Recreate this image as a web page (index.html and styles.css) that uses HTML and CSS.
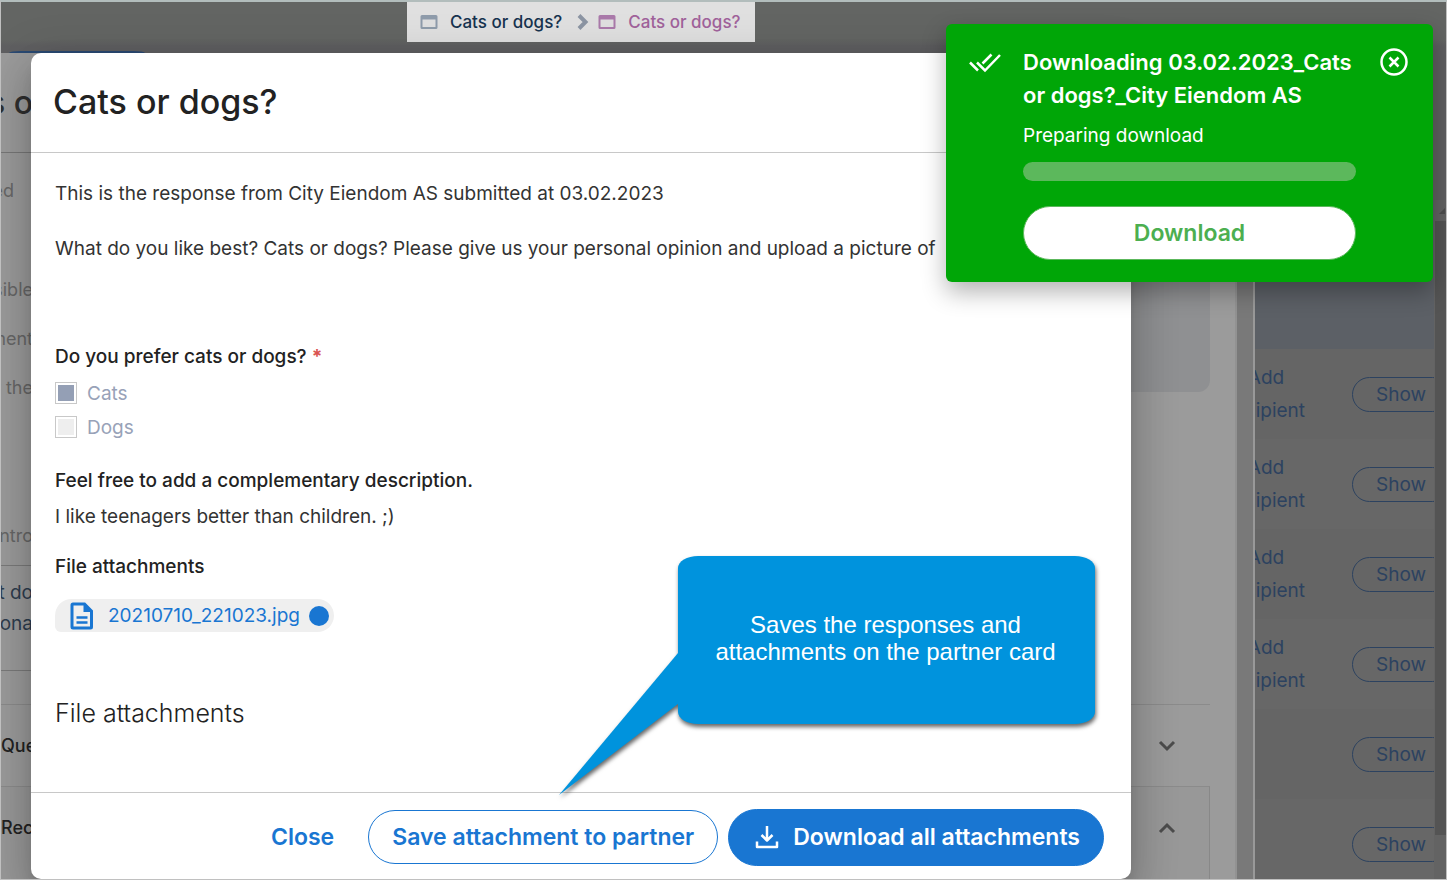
FILE: index.html
```html
<!DOCTYPE html>
<html lang="en">
<head>
    <meta charset="UTF-8">
    <meta name="viewport" content="width=device-width, initial-scale=1.0">
    <title>Cats or dogs?</title>
    <link rel="stylesheet" href="styles.css">
</head>
<body>
    <div class="app">
        <header class="topbar">
            <nav class="breadcrumb" aria-label="Breadcrumb">
                <a class="crumb" href="#">
                    <svg width="18" height="16" viewBox="0 0 18 16"><path fill="currentColor" fill-rule="evenodd" d="M2 1h14a1.500 1.500 0 0 1 1.500 1.500v11a1.500 1.500 0 0 1-1.500 1.500H2a1.500 1.500 0 0 1-1.500-1.500v-11A1.500 1.500 0 0 1 2 1zm.5 4.500v7.500h13V5.500z"/></svg>
                    <span>Cats or dogs?</span>
                </a>
                <svg class="crumb-sep" width="12" height="18" viewBox="0 0 12 18"><path d="M2 2.500L8.500 9L2 15.500" fill="none" stroke="currentColor" stroke-width="4"/></svg>
                <a class="crumb crumb-active" href="#">
                    <svg width="18" height="16" viewBox="0 0 18 16"><path fill="currentColor" fill-rule="evenodd" d="M2 1h14a1.500 1.500 0 0 1 1.500 1.500v11a1.500 1.500 0 0 1-1.500 1.500H2a1.500 1.500 0 0 1-1.500-1.500v-11A1.500 1.500 0 0 1 2 1zm.5 4.500v7.500h13V5.500z"/></svg>
                    <span>Cats or dogs?</span>
                </a>
            </nav>
            <div class="pill-edge"></div>
        </header>

        <main class="workspace">
            <section class="page">
                <div class="page-title">s o</div>
                <div class="page-intro">
                    <div class="page-labels">
                        <p class="label-first">ed</p>
                        <p class="label-gap">sible</p>
                        <p>ment</p>
                        <p>r the</p>
                        <p class="label-last">ntro</p>
                    </div>
                    <div class="page-card"></div>
                </div>
                <div class="page-note">
                    <p>t do</p>
                    <p>ona</p>
                </div>
                <div class="accordion accordion-closed">
                    <span>Que</span>
                    <button class="chevron" aria-label="Expand"><svg width="18" height="12" viewBox="0 0 18 12"><path d="M2 2l7 7l7-7" fill="none" stroke="currentColor" stroke-width="3"/></svg></button>
                </div>
                <div class="accordion accordion-open">
                    <span>Rec</span>
                    <button class="chevron" aria-label="Collapse"><svg width="18" height="12" viewBox="0 0 18 12"><path d="M2 10l7-7l7 7" fill="none" stroke="currentColor" stroke-width="3"/></svg></button>
                </div>
            </section>
            <div class="gutter"></div>
            <aside class="panel">
                <div class="panel-top"></div>
                <div class="panel-body">
                    <div class="panel-list">
                        <div class="panel-head"></div>
                        <table class="recipients">
                            <tr><td class="cell-add"><a href="#">Add recipient</a></td><td><button class="show">Show</button></td></tr>
                            <tr><td class="cell-add"><a href="#">Add recipient</a></td><td><button class="show">Show</button></td></tr>
                            <tr><td class="cell-add"><a href="#">Add recipient</a></td><td><button class="show">Show</button></td></tr>
                            <tr><td class="cell-add"><a href="#">Add recipient</a></td><td><button class="show">Show</button></td></tr>
                            <tr><td class="cell-add"></td><td><button class="show">Show</button></td></tr>
                            <tr><td class="cell-add"></td><td><button class="show">Show</button></td></tr>
                        </table>
                    </div>
                    <div class="scrollbar">
                        <svg width="11" height="21" viewBox="0 0 11 21"><path d="M4 14l6-6v6z" fill="#4d4d4d"/></svg>
                        <div class="thumb"></div>
                    </div>
                </div>
            </aside>
        </main>

        <div class="modal" role="dialog" aria-labelledby="modalTitle">
            <div class="modal-header">
                <h1 id="modalTitle">Cats or dogs?</h1>
            </div>
            <div class="modal-body">
                <p class="text intro">This is the response from City Eiendom AS submitted at 03.02.2023</p>
                <p class="text ask">What do you like best? Cats or dogs? Please give us your personal opinion and upload a picture of</p>

                <h2 class="question">Do you prefer cats or dogs? <span class="required">*</span></h2>
                <div class="options">
                    <label class="option"><input type="checkbox" checked disabled> Cats</label>
                    <label class="option"><input type="checkbox" disabled> Dogs</label>
                </div>

                <h2 class="question">Feel free to add a complementary description.</h2>
                <p class="text answer">I like teenagers better than children. ;)</p>

                <h2 class="question">File attachments</h2>
                <a class="file" href="#">
                    <svg width="24" height="28" viewBox="0 0 24 28"><path d="M3 2h11.500l7 7v16a1 1 0 0 1-1 1H3a1 1 0 0 1-1-1V3a1 1 0 0 1 1-1z" fill="none" stroke="currentColor" stroke-width="3"/><path d="M13.500 1.500v8.500h8.500z" fill="currentColor"/><path d="M6.500 15.500h11M6.500 20.500h11" stroke="currentColor" stroke-width="2.500"/></svg>
                    <span>20210710_221023.jpg</span>
                    <i class="dot"></i>
                </a>

                <h2 class="section-title">File attachments</h2>
            </div>
            <div class="modal-footer">
                <button class="btn btn-text">Close</button>
                <button class="btn btn-outline">Save attachment to partner</button>
                <button class="btn btn-primary">
                    <svg width="24" height="26" viewBox="0 0 24 26"><path d="M12 2v14M6.500 11l5.500 5.500l5.500-5.500M2 17.500v5.500h20v-5.500" fill="none" stroke="currentColor" stroke-width="2.500" stroke-linejoin="round"/></svg>
                    <span>Download all attachments</span>
                </button>
            </div>
        </div>

        <div class="callout">
            <svg class="callout-tail" width="122" height="144" viewBox="0 0 122 144"><path d="M122 0L120 2L1 144L120 53L122 51z" fill="#0093dd"/></svg>
            <p>Saves the responses and attachments on the partner card</p>
        </div>

        <div class="toast" role="status">
            <svg class="toast-check" width="34" height="22" viewBox="0 0 34 22"><path d="M2 10.500l8 8M9 10.500l8 8L32 3M14.500 11.500l9-9" fill="none" stroke="currentColor" stroke-width="2.500"/></svg>
            <div class="toast-content">
                <h3>Downloading 03.02.2023_Cats or dogs?_City Eiendom AS</h3>
                <p>Preparing download</p>
                <div class="progress"></div>
                <button class="toast-btn">Download</button>
            </div>
            <button class="toast-close" aria-label="Dismiss">
                <svg width="28" height="28" viewBox="0 0 28 28"><circle cx="14" cy="14" r="12.500" fill="none" stroke="currentColor" stroke-width="2.500"/><path d="M9.500 9.500l9 9M18.500 9.500l-9 9" stroke="currentColor" stroke-width="2.500"/></svg>
            </button>
        </div>
    </div>
</body>
</html>
```
FILE: styles.css
```css
* {
    box-sizing: border-box;
}

body {
    margin: 0;
    font-family: Inter, "Liberation Sans", sans-serif;
    color: #222;
    background: #bdbdbd;
}

h1, h2, h3, p {
    margin: 0;
}

button {
    font-family: inherit;
    cursor: pointer;
}

a {
    color: inherit;
    text-decoration: none;
}

svg {
    display: block;
    flex-shrink: 0;
}

.app {
    position: relative;
    display: flex;
    flex-direction: column;
    height: 100vh;
    overflow: hidden;
    border: 1px solid #c0c0c0;
    border-top: 2px solid #b2bdbc;
}

/* Top bar */
.topbar {
    height: 51px;
    padding-left: 406px;
    background: linear-gradient(#636563 38px, #5f5f61 44px);
    position: relative;
    flex-shrink: 0;
}

.breadcrumb {
    display: flex;
    align-items: center;
    width: 348px;
    height: 40px;
    padding-left: 13px;
    background: #e0e0e0;
    font-size: 17px;
    font-weight: 500;
    white-space: nowrap;
}

.crumb {
    display: flex;
    align-items: center;
    gap: 12px;
    color: #8f9cab;
}

.crumb span {
    color: #17334f;
}

.crumb-active {
    color: #aa7aaa;
}

.crumb-active span {
    color: #a0629b;
}

.crumb-sep {
    margin: 0 9px 0 15px;
    color: #8c95a3;
}

.pill-edge {
    position: absolute;
    left: 8px;
    bottom: 0;
    width: 136px;
    height: 2px;
    background: #2a4a73;
    border-radius: 12px 12px 0 0 / 2px 2px 0 0;
}

/* Dimmed page behind the dialog */
.workspace {
    display: flex;
    flex: 1;
    min-height: 0;
}

.page {
    flex: 1;
    background: #9b9b9b;
    color: #676767;
    font-size: 18px;
    overflow: hidden;
}

.page-title,
.page-labels,
.page-note {
    display: flex;
    justify-content: flex-end;
    width: 32px;
    white-space: nowrap;
}

.page-title {
    align-items: center;
    height: 99px;
    font-size: 32px;
    font-weight: 500;
    color: #2f2f2f;
}

.page-intro {
    display: flex;
    justify-content: space-between;
    height: 413px;
    padding-right: 25px;
    border-top: 1px solid #777;
}

.page-labels {
    flex-direction: column;
    justify-content: flex-start;
    align-items: flex-end;
    line-height: 24px;
    gap: 25px;
    padding-top: 26px;
}

.label-first {
    padding-right: 19px;
}

.label-gap {
    margin-top: 50px;
}

.label-last {
    margin-top: 99px;
}

.page-card {
    width: 300px;
    height: 239px;
    background: #8f9092;
    border-radius: 0 0 12px 12px;
}

.page-note {
    flex-direction: column;
    justify-content: flex-start;
    align-items: flex-end;
    height: 106px;
    padding-top: 11px;
    line-height: 31px;
    font-size: 19px;
    color: #2e3d4e;
    border-top: 1px solid #7a7a7a;
    border-bottom: 1px solid #7a7a7a;
}

.accordion {
    display: flex;
    justify-content: space-between;
    align-items: center;
    height: 82px;
    margin-right: 25px;
    padding-right: 34px;
    color: #222;
    font-weight: 500;
    border-top: 1px solid #8b8b8b;
}

.accordion-closed {
    margin-top: 33px;
}

.accordion-open {
    height: 120px;
    padding-right: 33px;
    padding-bottom: 38px;
    background: #989898;
    border-right: 1px solid #888;
}

.chevron {
    padding: 0;
    border: 0;
    background: none;
    color: #4c4c4c;
}

.gutter {
    width: 20px;
    background: #797979;
    border-left: 2px solid #929292;
    border-right: 2px solid #999;
}

/* Recipient panel */
.panel {
    display: flex;
    flex-direction: column;
    width: 191px;
    background: #666;
}

.panel-top {
    height: 147px;
    background: #5f5f61;
}

.panel-body {
    display: flex;
    flex: 1;
    min-height: 0;
}

.panel-list {
    flex: 1;
    min-width: 0;
    overflow: hidden;
}

.panel-head {
    height: 149px;
    background: #5c6066;
}

.recipients {
    width: 260px;
    margin-left: -49px;
    border-collapse: collapse;
    table-layout: fixed;
    font-size: 19px;
    color: #2c4260;
}

.recipients tr {
    height: 90px;
    background: #656565;
}

.recipients tr:nth-child(even) {
    background: #676767;
}

.recipients td {
    padding: 0;
}

.recipients .cell-add {
    width: 120px;
    line-height: 33px;
    text-align: center;
}

.cell-add a {
    display: block;
    width: 90px;
    margin: 0 auto;
}

.show {
    display: block;
    height: 35px;
    margin-left: 26px;
    padding: 0 23px;
    border: 1px solid #2c4260;
    border-radius: 18px;
    background: none;
    color: inherit;
    font-size: 19px;
}

.scrollbar {
    width: 12px;
    padding-left: 1px;
    background: #636363;
}

.thumb {
    height: 614px;
    background: #545454;
}

/* Dialog */
.modal {
    position: absolute;
    top: 51px;
    left: 30px;
    right: 315px;
    bottom: 0;
    display: flex;
    flex-direction: column;
    background: #fff;
    border-radius: 10px;
    box-shadow: 0 11px 15px -7px rgba(0, 0, 0, 0.2), 0 24px 38px 3px rgba(0, 0, 0, 0.14), 0 9px 46px 8px rgba(0, 0, 0, 0.12);
}

.modal-header {
    display: flex;
    align-items: center;
    height: 100px;
    padding: 0 22px 2px;
    border-bottom: 1px solid #c8c8c8;
}

.modal-header h1 {
    font-size: 34px;
    font-weight: 500;
}

.modal-body {
    flex: 1;
    padding: 26px 24px 0;
}

.text {
    font-size: 19px;
    line-height: 30px;
    color: #333;
    white-space: nowrap;
}

.ask {
    margin-top: 25px;
    margin-bottom: 78px;
}

.question {
    font-size: 19px;
    font-weight: 500;
    line-height: 30px;
}

.required {
    color: #d9534f;
    font-weight: 700;
}

.options {
    display: flex;
    flex-direction: column;
    gap: 4px;
    margin: 6px 0 24px;
}

.option {
    display: flex;
    align-items: center;
    gap: 10px;
    height: 30px;
    font-size: 19px;
    color: #98a2b8;
}

.option input {
    appearance: none;
    width: 22px;
    height: 22px;
    margin: 0;
    padding: 2px;
    border: 1px solid #c8c8c8;
    background: #eee content-box;
}

.option input:checked {
    background: #949fb5 content-box;
}

.answer {
    margin: 6px 0 20px;
}

.file {
    display: flex;
    align-items: center;
    gap: 9px;
    width: fit-content;
    height: 33px;
    margin-top: 17px;
    padding: 0 5px 0 15px;
    background: #efefef;
    border-radius: 17px 17px 17px 6px;
    color: #1976d2;
    font-size: 19px;
}

.file span {
    margin-left: 5px;
}

.dot {
    width: 20px;
    height: 20px;
    border-radius: 50%;
    background: #1976d2;
}

.section-title {
    margin-top: 65px;
    font-size: 25px;
    font-weight: 300;
    line-height: 32px;
}

.modal-footer {
    display: flex;
    justify-content: flex-end;
    align-items: center;
    gap: 10px;
    height: 87px;
    padding: 2px 27px 0 24px;
    border-top: 1px solid #c8c8c8;
}

.btn {
    display: flex;
    align-items: center;
    gap: 14px;
    height: 54px;
    padding: 0 23px;
    border: 1px solid #1976d2;
    border-radius: 29px;
    background: #fff;
    color: #1976d2;
    font-size: 23px;
    font-weight: 600;
    white-space: nowrap;
}

.btn-text {
    border-color: transparent;
}

.btn-primary {
    height: 57px;
    padding: 0 23px 0 26px;
    background: #1976d2;
    color: #fff;
}

/* Callout bubble */
.callout {
    position: absolute;
    top: 554px;
    left: 677px;
    display: flex;
    align-items: center;
    justify-content: center;
    width: 417px;
    height: 168px;
    padding: 0 26px 4px 24px;
    background: #0093dd;
    border-radius: 20px / 12px;
    color: #fff;
    font-family: "Liberation Sans", Arial, sans-serif;
    font-size: 24px;
    line-height: 27px;
    text-align: center;
    filter: drop-shadow(1px 3px 2px rgba(0, 0, 0, 0.6));
}

.callout-tail {
    position: absolute;
    left: -120px;
    top: 95px;
}

/* Download toast */
.toast {
    position: absolute;
    top: 22px;
    right: 13px;
    display: flex;
    width: 487px;
    padding: 22px 25px 22px 22px;
    background: #00a607;
    border-radius: 6px;
    color: #fff;
    box-shadow: 0 10px 24px rgba(0, 0, 0, 0.3);
}

.toast-check {
    margin: 6px 21px 0 0;
}

.toast-content {
    width: 333px;
}

.toast-content h3 {
    font-size: 22px;
    font-weight: 600;
    line-height: 33px;
}

.toast-content p {
    margin-top: 9px;
    font-size: 19px;
    line-height: 30px;
}

.progress {
    height: 19px;
    margin: 11px 0 25px;
    background: #5cb85c;
    border-radius: 10px;
}

.toast-btn {
    width: 100%;
    height: 54px;
    border: 1px solid #5cb85c;
    border-radius: 27px;
    background: #fff;
    color: #4caf50;
    font-size: 23px;
    font-weight: 600;
}

.toast-close {
    align-self: flex-start;
    margin: 2px 0 0 auto;
    padding: 0;
    border: 0;
    background: none;
    color: #fff;
}
```
